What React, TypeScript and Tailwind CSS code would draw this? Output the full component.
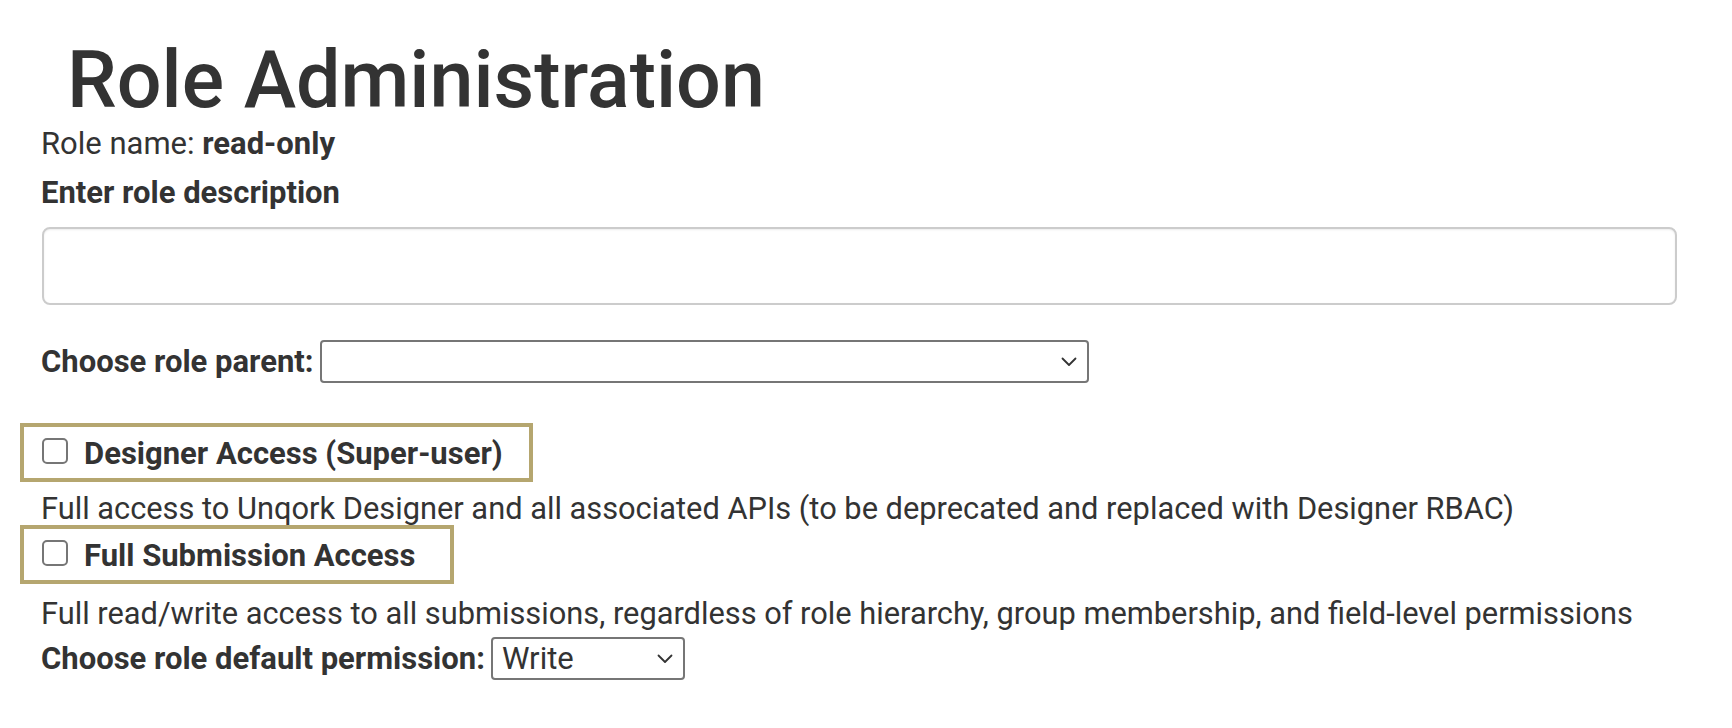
import React from 'react';

const Chevron = () => (
  <svg width="16" height="10" viewBox="0 0 16 10" fill="none" className="pointer-events-none absolute top-1/2 -translate-y-1/2 right-[12px]">
    <path d="M1.5 1.5 L8 8 L14.5 1.5" stroke="#333" strokeWidth="1.8" strokeLinecap="round" strokeLinejoin="round" />
  </svg>
);

interface AccessBoxProps {
  label: string;
  width: string;
}

const AccessBox: React.FC<AccessBoxProps> = ({ label, width }) => (
  <div className={`ml-[-21px] h-[59px] border-4 border-[#b5a66f] flex items-start pl-[18px] ${width}`}>
    <input
      type="checkbox"
      className="appearance-none mt-[11px] w-[26px] h-[26px] rounded-[5px] border-2 border-[#767676] bg-white flex-shrink-0"
    />
    <span className="ml-[16px] mt-[7px] text-[31px] leading-[40px] font-bold whitespace-nowrap">{label}</span>
  </div>
);

export default function App() {
  return (
    <div className="min-h-[728px] w-full bg-white pl-[41px] pt-[40px] text-[#333] font-['Roboto',sans-serif] flex flex-col items-start">
      <h1 className="ml-[26px] text-[79px] leading-[80px] font-medium">Role Administration</h1>

      <p className="mt-[4px] text-[31px] leading-[40px]">
        Role name: <span className="font-bold">read-only</span>
      </p>

      <label className="mt-[9px] text-[31px] leading-[40px] font-bold">Enter role description</label>

      <textarea className="mt-[14px] ml-[1px] w-[1635px] h-[78px] rounded-[8px] border-2 border-[#cccccc] shadow-[inset_0_1px_2px_rgba(0,0,0,0.08)] resize-none outline-none" />

      {/* Parent role */}
      <div className="mt-[35px] h-[43px] flex items-center">
        <span className="text-[31px] leading-[40px] font-bold">Choose role parent:</span>
        <div className="relative ml-[7px]">
          <select className="appearance-none w-[769px] h-[43px] rounded-[4px] border-2 border-[#767676] bg-white text-[31px] pl-[10px] outline-none">
            <option></option>
          </select>
          <Chevron />
        </div>
      </div>

      <div className="mt-[40px]">
        <AccessBox label="Designer Access (Super-user)" width="w-[513px]" />
      </div>
      <p className="mt-[11px] text-[30.8px] leading-[32px] whitespace-nowrap">
        Full access to Unqork Designer and all associated APIs (to be deprecated and replaced with Designer RBAC)
      </p>

      <AccessBox label="Full Submission Access" width="w-[434px]" />
      <p className="mt-[14px] text-[30.8px] leading-[32px] whitespace-nowrap">
        Full read/write access to all submissions, regardless of role hierarchy, group membership, and field-level permissions
      </p>

      {/* Default permission */}
      <div className="mt-[7px] h-[43px] flex items-center">
        <span className="text-[31px] leading-[40px] font-bold">Choose role default permission:</span>
        <div className="relative ml-[6px]">
          <select
            defaultValue="Write"
            className="appearance-none w-[194px] h-[43px] rounded-[4px] border-2 border-[#767676] bg-white text-[31px] leading-[36px] pl-[9px] text-[#333] outline-none"
          >
            <option>Read</option>
            <option>Write</option>
          </select>
          <Chevron />
        </div>
      </div>
    </div>
  );
}
